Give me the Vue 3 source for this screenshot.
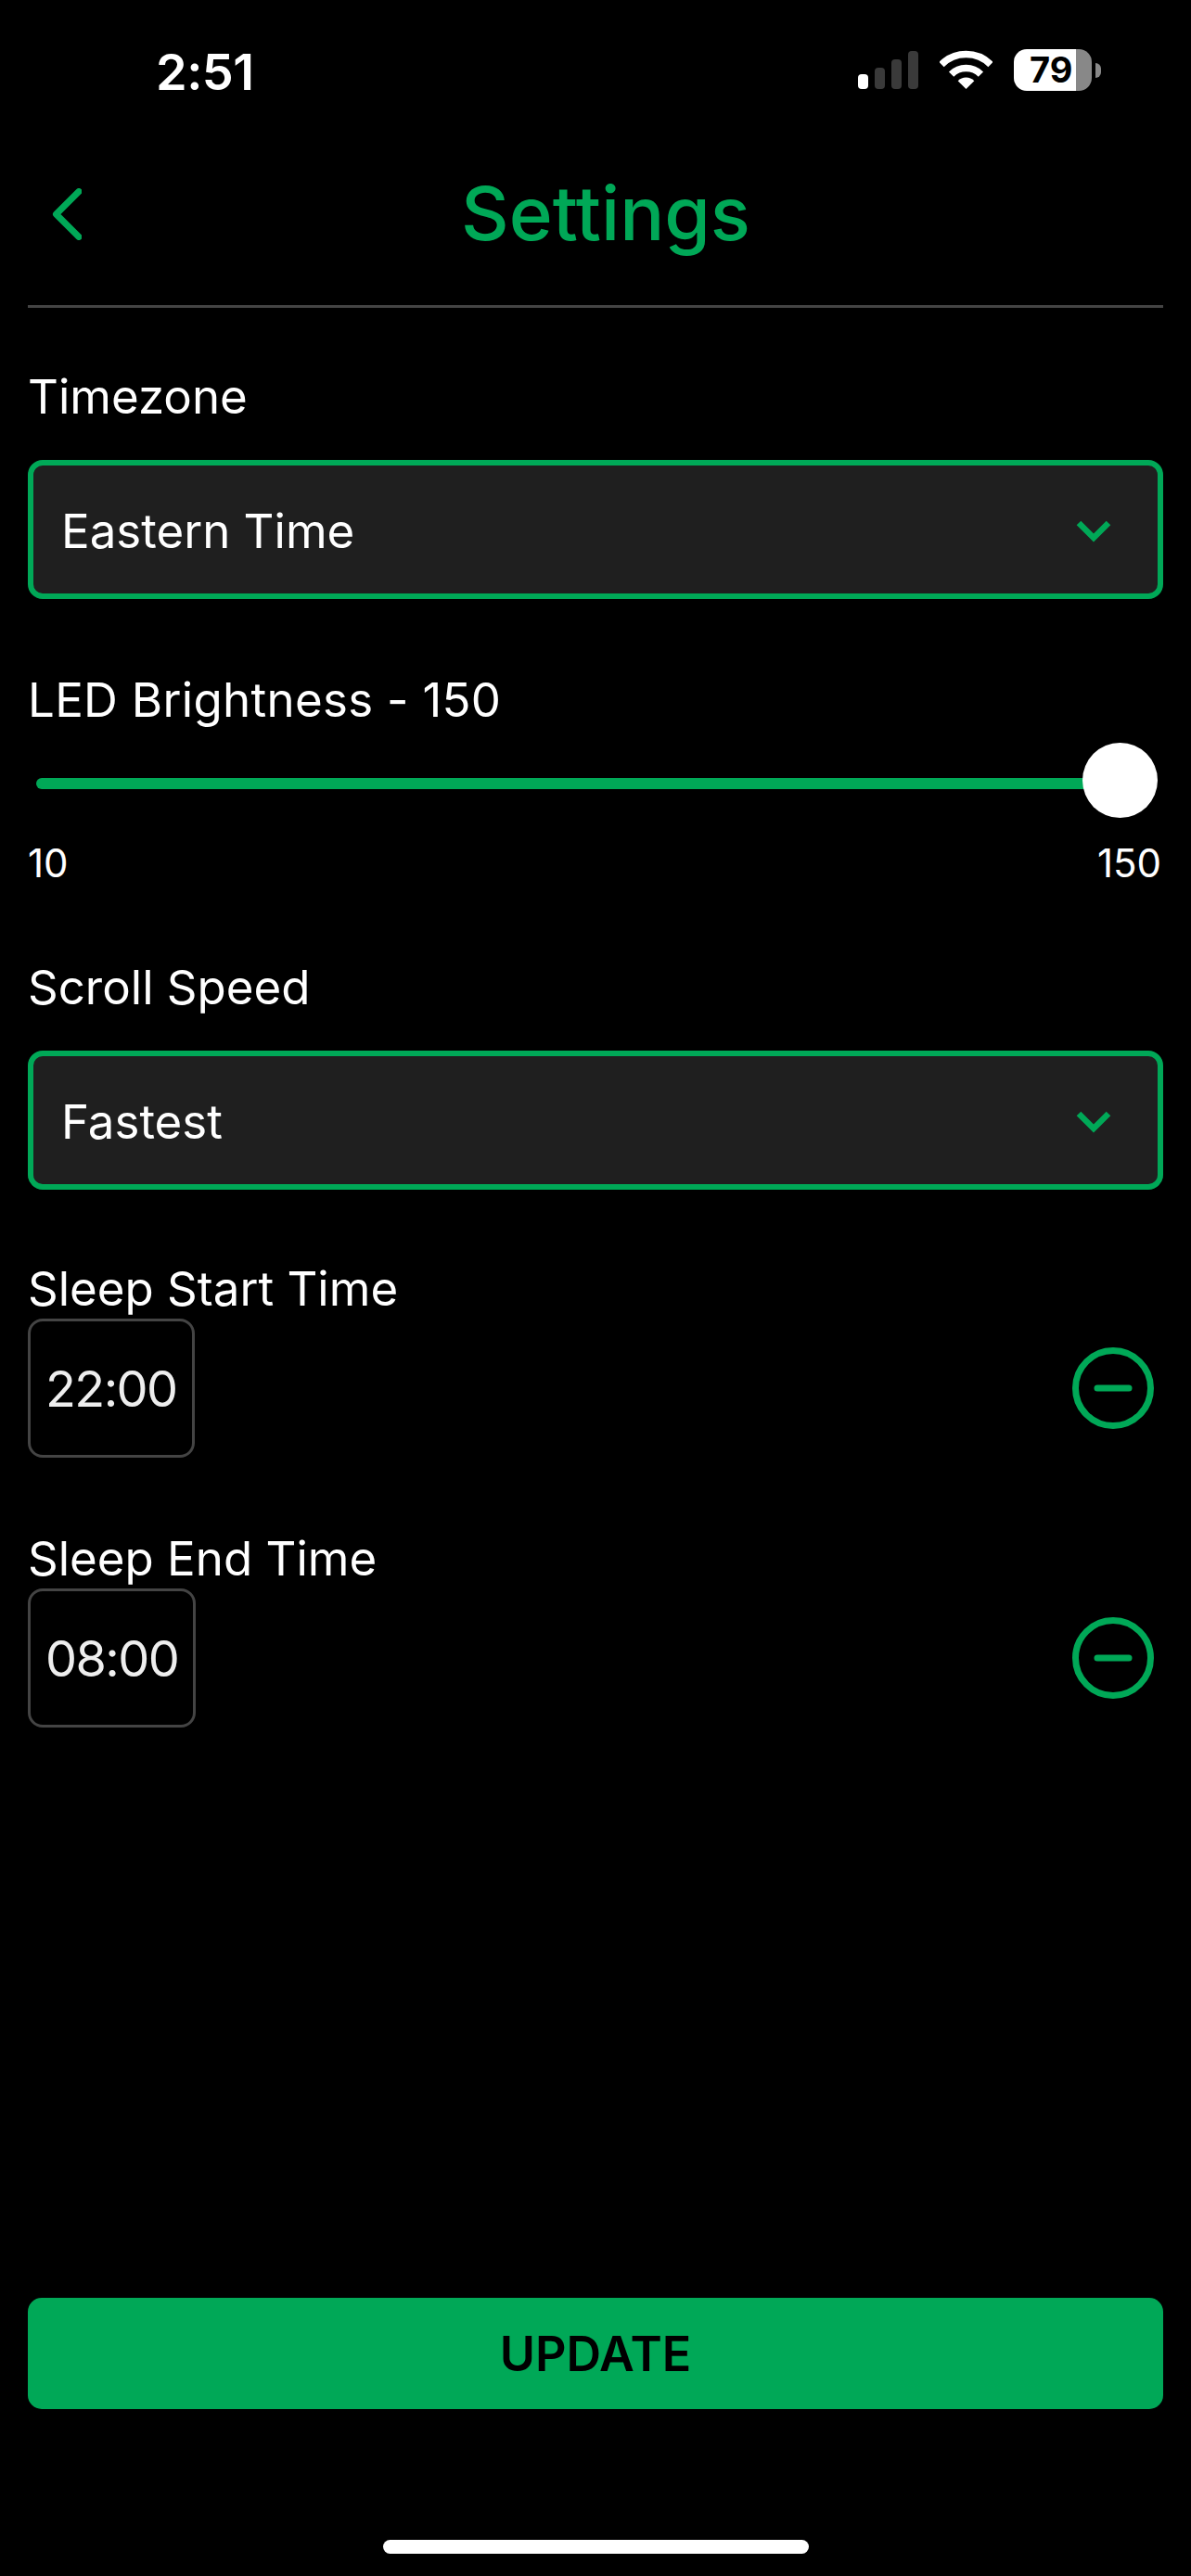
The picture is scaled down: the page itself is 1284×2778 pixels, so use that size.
<script setup>
const sleepRows = [
  { id: 'start', label: 'Sleep Start Time', value: '22:00' },
  { id: 'end', label: 'Sleep End Time', value: '08:00' },
]
</script>

<template>
  <div class="page">
    <div class="status">
      <span class="clock">2:51</span>
      <div class="status-icons">
        <div class="signal">
          <i class="bar on b1"></i><i class="bar b2"></i><i class="bar b3"></i><i class="bar b4"></i>
        </div>
        <svg class="wifi" width="57" height="42" viewBox="0 0 57 42" fill="none">
          <path d="M2 15.5A37.5 37.5 0 0 1 55 15.5" stroke="#fff" stroke-width="7.5" />
          <path d="M12.6 26.1A22.5 22.5 0 0 1 44.4 26.1" stroke="#fff" stroke-width="7.5" />
          <path d="M28.5 42L19.7 33.2A12.5 12.5 0 0 1 37.3 33.2Z" fill="#fff" />
        </svg>
        <div class="battery">
          <div class="cell"><span class="pct">79</span></div>
          <i class="nub"></i>
        </div>
      </div>
    </div>

    <header class="header">
      <svg class="back" width="32" height="56" viewBox="0 0 32 56" fill="none">
        <path d="M29 3.5L4.5 28L29 52.5" stroke="#00a857" stroke-width="7" stroke-linecap="round" stroke-linejoin="round" />
      </svg>
      <h1 class="title">Settings</h1>
    </header>

    <main class="form">
      <section class="field">
        <div class="label">Timezone</div>
        <div class="select">
          <span class="value">Eastern Time</span>
          <svg class="chev" width="38" height="25" viewBox="0 0 38 25" fill="none">
            <path d="M3 4L19 20L35 4" stroke="#00a857" stroke-width="6.5" />
          </svg>
        </div>
      </section>

      <section class="field slider-field">
        <div class="label wide">LED Brightness - 150</div>
        <div class="track"><i class="thumb"></i></div>
        <div class="range"><span>10</span><span>150</span></div>
      </section>

      <section class="field speed">
        <div class="label">Scroll Speed</div>
        <div class="select">
          <span class="value">Fastest</span>
          <svg class="chev" width="38" height="25" viewBox="0 0 38 25" fill="none">
            <path d="M3 4L19 20L35 4" stroke="#00a857" stroke-width="6.5" />
          </svg>
        </div>
      </section>

      <section v-for="row in sleepRows" :key="row.id" class="sleep">
        <div class="label">{{ row.label }}</div>
        <div class="sleep-row">
          <div class="time">{{ row.value }}</div>
          <svg class="minus" width="88" height="88" viewBox="0 0 88 88" fill="none">
            <circle cx="44" cy="44" r="40.5" stroke="#00a857" stroke-width="7" />
            <path d="M27 44H61" stroke="#00a857" stroke-width="7" stroke-linecap="round" />
          </svg>
        </div>
      </section>
    </main>

    <button class="update">UPDATE</button>
    <div class="home"><i></i></div>
  </div>
</template>

<style>
html, body { margin: 0; background: #000; }
</style>

<style scoped>
.page {
  width: 1284px;
  height: 2778px;
  background: #000;
  color: #fff;
  display: flex;
  flex-direction: column;
  font-family: Inter, "Liberation Sans", sans-serif;
  box-sizing: border-box;
}
.status {
  height: 152px;
  box-sizing: border-box;
  padding: 53px 97px 0 168px;
  display: flex;
  justify-content: space-between;
  align-items: flex-start;
}
.clock {
  font-size: 54px;
  font-weight: 600;
  line-height: 50px;
  letter-spacing: -0.5px;
}
.status-icons {
  display: flex;
  align-items: flex-end;
  height: 45px;
}
.signal {
  display: flex;
  align-items: flex-end;
  gap: 7px;
  height: 41px;
  margin-bottom: 2px;
}
.bar {
  width: 11px;
  border-radius: 4px;
  background: #3a3a3a;
  display: block;
}
.bar.on { background: #fff; }
.b1 { height: 16px; }
.b2 { height: 23px; }
.b3 { height: 32px; }
.b4 { height: 41px; }
.wifi {
  margin-left: 23px;
  margin-bottom: 2px;
}
.battery {
  margin-left: 23px;
  display: flex;
  align-items: center;
  gap: 4px;
}
.cell {
  width: 84px;
  height: 45px;
  border-radius: 14px;
  background: linear-gradient(90deg, #fff 0, #fff 67px, #888 67px, #888 100%);
  color: #000;
  box-sizing: border-box;
  padding-left: 17px;
  display: flex;
  align-items: center;
}
.pct {
  font-size: 38px;
  font-weight: 700;
  line-height: 45px;
}
.nub {
  display: block;
  width: 6px;
  height: 16px;
  border-radius: 0 8px 8px 0;
  background: #888;
}
.header {
  margin: 0 30px;
  height: 180px;
  box-sizing: border-box;
  border-bottom: 3px solid #444;
  padding: 0 36px 0 26px;
  display: flex;
  align-items: flex-start;
}
.back {
  margin-top: 51px;
  flex: none;
}
.title {
  flex: 1;
  margin: 0;
  text-align: center;
  font-size: 80px;
  font-weight: 500;
  line-height: 90px;
  color: #00a857;
  padding-top: 33px;
}
.form {
  display: flex;
  flex-direction: column;
  padding: 0 30px;
}
.label {
  font-size: 51px;
  line-height: 60px;
  font-weight: 400;
}
.label.wide { letter-spacing: 0.3px; }
.field { padding-top: 66px; }
.select {
  margin-top: 38px;
  height: 150px;
  box-sizing: border-box;
  border: 6px solid #00a857;
  border-radius: 16px;
  background: #1f1f1f;
  padding: 0 30px;
  display: flex;
  align-items: center;
  justify-content: space-between;
  font-size: 51px;
}
.value { padding-top: 2px; }
.chev { margin-top: 2px; margin-right: 20px; }
.slider-field { padding-top: 79px; }
.track {
  position: relative;
  margin: 54px 0 0 9px;
  width: 1170px;
  height: 12px;
  border-radius: 6px;
  background: #00a857;
}
.thumb {
  position: absolute;
  right: -39px;
  top: -38px;
  width: 81px;
  height: 81px;
  border-radius: 50%;
  background: #fff;
}
.range {
  margin-top: 55px;
  padding-right: 2px;
  display: flex;
  justify-content: space-between;
  font-size: 42px;
  line-height: 50px;
}
.speed { padding-top: 79px; }
.sleep { padding-top: 77px; }
.sleep + .sleep { padding-top: 79px; }
.sleep-row {
  margin-top: 2px;
  display: flex;
  justify-content: space-between;
  align-items: center;
  padding-right: 10px;
}
.time {
  height: 150px;
  box-sizing: border-box;
  border: 3px solid #444;
  border-radius: 16px;
  padding: 0 16px;
  display: flex;
  align-items: center;
  font-size: 54px;
  letter-spacing: -1.6px;
  color: #eee;
}
.update {
  margin: auto 30px 0;
  height: 120px;
  border: 0;
  border-radius: 15px;
  background: #00a857;
  color: #000;
  font-family: inherit;
  font-size: 52px;
  font-weight: 600;
  padding: 0;
}
.home {
  height: 180px;
  box-sizing: border-box;
  padding-top: 141px;
  display: flex;
  justify-content: center;
}
.home i {
  display: block;
  width: 459px;
  height: 15px;
  border-radius: 8px;
  background: #fff;
}
</style>
